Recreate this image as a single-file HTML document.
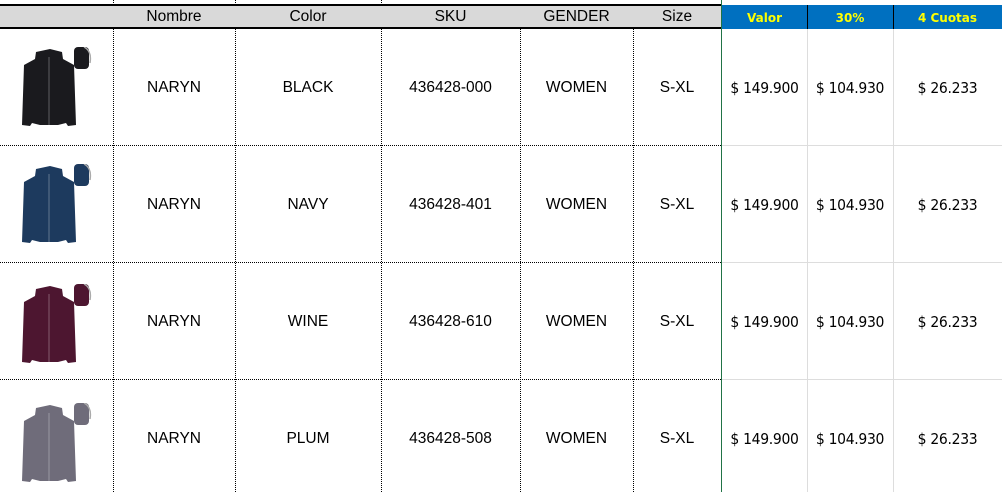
<!DOCTYPE html><html><head><style>
body{margin:0;width:1002px;height:492px;position:relative;background:#fff;font-family:"Liberation Sans",Arial,sans-serif;overflow:hidden}
.a{position:absolute}
.vd{position:absolute;width:0;border-left:1px dotted #000}
.hd{position:absolute;height:0;border-top:1px dotted #000}
.t{position:absolute;font-size:15.5px;color:#000;text-align:center;line-height:16px}
.h{position:absolute;top:9px;font-size:15.5px;text-align:center;line-height:16px}
.b{position:absolute;top:10px;font-size:12px;font-weight:bold;color:#ffff00;text-align:center;font-family:"DejaVu Sans",sans-serif;line-height:16px}
.p{position:absolute;font-size:15.5px;text-align:center;line-height:16px;font-family:"DejaVu Sans Condensed","DejaVu Sans",sans-serif;letter-spacing:-0.3px}
</style></head><body>
<div class="a" style="left:0;top:5px;width:721px;height:23px;background:#d9d9d9"></div>
<div class="a" style="left:0;top:4px;width:721px;height:2px;background:#000"></div>
<div class="a" style="left:0;top:27px;width:721px;height:2px;background:#000"></div>
<div class="a" style="left:722px;top:5px;width:280px;height:24px;background:#0070c0"></div>
<div class="a" style="left:807px;top:5px;width:1px;height:24px;background:#000"></div>
<div class="a" style="left:893px;top:5px;width:1px;height:24px;background:#000"></div>
<div class="a" style="left:807px;top:29px;width:1px;height:463px;background:#ddd"></div>
<div class="a" style="left:893px;top:29px;width:1px;height:463px;background:#ddd"></div>
<div class="a" style="left:721px;top:0;width:1px;height:492px;background:#217346"></div>
<div class="vd" style="left:113px;top:0;height:5px"></div><div class="vd" style="left:235px;top:0;height:5px"></div><div class="vd" style="left:381px;top:0;height:5px"></div>
<div class="vd" style="left:113px;top:29px;height:463px"></div>
<div class="vd" style="left:235px;top:29px;height:463px"></div>
<div class="vd" style="left:381px;top:29px;height:463px"></div>
<div class="vd" style="left:520px;top:29px;height:463px"></div>
<div class="vd" style="left:633px;top:29px;height:463px"></div>
<div class="hd" style="left:0;top:145px;width:721px"></div>
<div class="hd" style="left:0;top:262px;width:721px"></div>
<div class="hd" style="left:0;top:379px;width:721px"></div>
<div class="a" style="left:722px;top:145px;width:280px;height:1px;background:#ddd"></div>
<div class="a" style="left:722px;top:262px;width:280px;height:1px;background:#ddd"></div>
<div class="a" style="left:722px;top:379px;width:280px;height:1px;background:#ddd"></div>
<div class="h" style="left:113px;width:122px">Nombre</div>
<div class="h" style="left:235px;width:146px">Color</div>
<div class="h" style="left:381px;width:139px">SKU</div>
<div class="h" style="left:520px;width:113px">GENDER</div>
<div class="h" style="left:633px;width:88px">Size</div>
<div class="b" style="left:722px;width:85px">Valor</div>
<div class="b" style="left:807px;width:86px">30%</div>
<div class="b" style="left:893px;width:109px">4 Cuotas</div>
<svg width="0" height="0" style="position:absolute"><defs>
<g id="j"><path d="M32 2 L44 5 L45 12 L56 18 L58 78 L50 79 L48 76 L40 78 L22 78 L14 76 L12 79 L4 78 L6 18 L17 12 L18 5 Z"/><rect x="56" y="0" width="15" height="22" rx="4"/><path d="M66 0 Q74 4 72 16" fill="none" stroke="#aaa" stroke-width="1.5"/><path d="M31 10 V78" stroke="#fff" stroke-opacity=".3" stroke-width="1"/></g>
</defs></svg>
<svg class="a" style="left:18px;top:47px" width="80" height="82" fill="#1a1a1e"><use href="#j"/></svg>
<svg class="a" style="left:18px;top:164px" width="80" height="82" fill="#1d3a5e"><use href="#j"/></svg>
<svg class="a" style="left:18px;top:284px" width="80" height="82" fill="#4d1630"><use href="#j"/></svg>
<svg class="a" style="left:18px;top:403px" width="80" height="82" fill="#6f6c7a"><use href="#j"/></svg>
<div class="t" style="left:113px;width:122px;top:80px">NARYN</div><div class="t" style="left:235px;width:146px;top:80px">BLACK</div><div class="t" style="left:381px;width:139px;top:80px">436428-000</div><div class="t" style="left:520px;width:113px;top:80px">WOMEN</div><div class="t" style="left:633px;width:88px;top:80px">S-XL</div>
<div class="p" style="left:722px;width:85px;top:80px">$ 149.900</div><div class="p" style="left:807px;width:86px;top:80px">$ 104.930</div><div class="p" style="left:893px;width:109px;top:80px">$ 26.233</div>
<div class="t" style="left:113px;width:122px;top:197px">NARYN</div><div class="t" style="left:235px;width:146px;top:197px">NAVY</div><div class="t" style="left:381px;width:139px;top:197px">436428-401</div><div class="t" style="left:520px;width:113px;top:197px">WOMEN</div><div class="t" style="left:633px;width:88px;top:197px">S-XL</div>
<div class="p" style="left:722px;width:85px;top:197px">$ 149.900</div><div class="p" style="left:807px;width:86px;top:197px">$ 104.930</div><div class="p" style="left:893px;width:109px;top:197px">$ 26.233</div>
<div class="t" style="left:113px;width:122px;top:314px">NARYN</div><div class="t" style="left:235px;width:146px;top:314px">WINE</div><div class="t" style="left:381px;width:139px;top:314px">436428-610</div><div class="t" style="left:520px;width:113px;top:314px">WOMEN</div><div class="t" style="left:633px;width:88px;top:314px">S-XL</div>
<div class="p" style="left:722px;width:85px;top:314px">$ 149.900</div><div class="p" style="left:807px;width:86px;top:314px">$ 104.930</div><div class="p" style="left:893px;width:109px;top:314px">$ 26.233</div>
<div class="t" style="left:113px;width:122px;top:431px">NARYN</div><div class="t" style="left:235px;width:146px;top:431px">PLUM</div><div class="t" style="left:381px;width:139px;top:431px">436428-508</div><div class="t" style="left:520px;width:113px;top:431px">WOMEN</div><div class="t" style="left:633px;width:88px;top:431px">S-XL</div>
<div class="p" style="left:722px;width:85px;top:431px">$ 149.900</div><div class="p" style="left:807px;width:86px;top:431px">$ 104.930</div><div class="p" style="left:893px;width:109px;top:431px">$ 26.233</div>
</body></html>
